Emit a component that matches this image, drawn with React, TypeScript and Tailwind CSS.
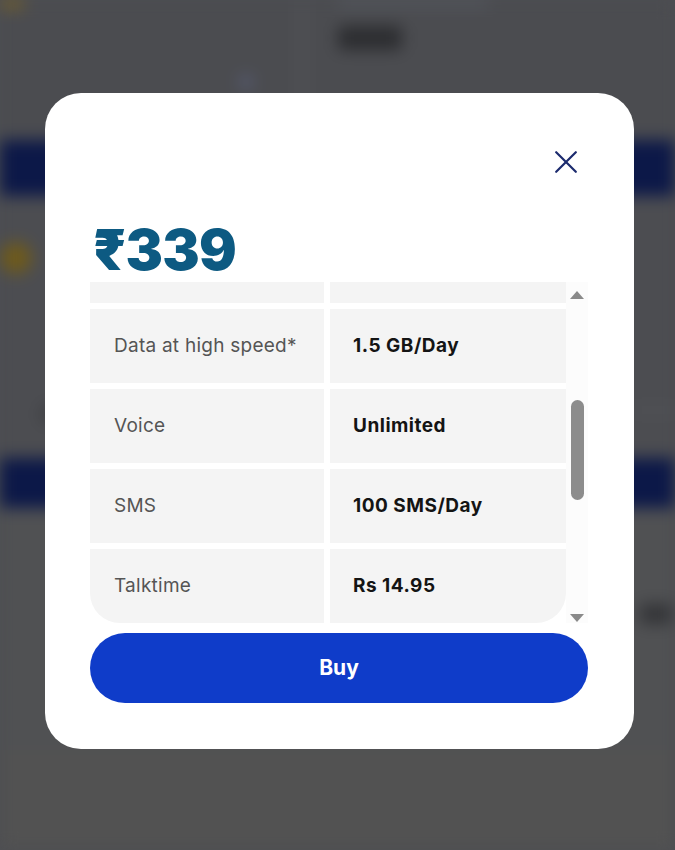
const rows = [
  { label: "", value: "" },
  { label: "Data at high speed*", value: "1.5 GB/Day" },
  { label: "Voice", value: "Unlimited" },
  { label: "SMS", value: "100 SMS/Day" },
  { label: "Talktime", value: "Rs 14.95" },
];

function BackdropPage() {
  return (
    <div className="absolute inset-0 flex flex-col blur-[8px]">
      <div className="flex h-[140px] bg-[#4b4c50]">
        <div className="flex w-[298px] flex-col justify-between">
          <div className="h-2 w-6 bg-[#7a6222]" />
          <div className="ml-[240px] flex flex-col gap-8 pb-2">
            <div className="h-3 w-3 rounded-full bg-[#5a6080]" />
            <div className="h-3 w-6 rounded-full bg-[#3d6a48]" />
          </div>
        </div>
        <div className="w-[8px] bg-[#515256]" />
        <div className="flex flex-col gap-5 pl-8">
          <div className="h-1.5 w-[150px] bg-[#565a62]" />
          <div className="h-6 w-16 rounded bg-[#2c2d30]" />
        </div>
      </div>
      <div className="h-[56px] bg-[#0c1848]" />
      <div className="flex h-[262px] flex-col bg-[#4c4d51] pt-[46px]">
        <div className="h-8 w-8 rounded-full bg-[#6e5a1c]" />
        <div className="mt-[130px] flex justify-between">
          <div className="ml-10 h-5 w-5 rounded-full bg-[#3e3f42]" />
          <div className="h-3 w-10 bg-[#4f5054]" />
        </div>
      </div>
      <div className="h-[50px] bg-[#0c1848]" />
      <div className="flex flex-1 flex-col bg-[#505153] pt-[96px]">
        <div className="ml-[640px] h-5 w-8 rounded bg-[#333437]" />
      </div>
      <div className="h-[100px] bg-[#525252]" />
    </div>
  );
}

function ScrollBar() {
  return (
    <div className="flex w-[22px] flex-col items-center bg-[#fcfcfc] pb-[1px] pt-[9px]">
      <div className="h-0 w-0 border-x-[7px] border-b-[8px] border-x-transparent border-b-[#8a8a8a]" />
      <div className="mt-[101px] h-[100px] w-[13px] rounded-full bg-[#8c8c8c]" />
      <div className="flex-1" />
      <div className="h-0 w-0 border-x-[7px] border-t-[8px] border-x-transparent border-t-[#8a8a8a]" />
    </div>
  );
}

export default function App() {
  return (
    <div
      className="relative h-[850px] w-full overflow-hidden bg-[#4d4e52]"
      style={{ fontFamily: "Inter, 'Noto Sans', Roboto, sans-serif" }}
    >
      <BackdropPage />
      <div className="absolute inset-0 pl-[45px] pt-[93px]">
        <div className="flex h-[656px] w-[589px] flex-col rounded-[36px] bg-white pl-[45px] pr-[46px]">
          <div className="flex justify-end pr-[11px] pt-[58px]">
            <svg width="22" height="22" viewBox="0 0 22 22" className="text-[#1c2b6e]">
              <path d="M1.2 1.2 L20.8 20.8 M20.8 1.2 L1.2 20.8" stroke="currentColor" strokeWidth="2.2" strokeLinecap="round" fill="none" />
            </svg>
          </div>
          <div className="ml-[3px] mt-[49px] text-[56px] font-black leading-none tracking-[-0.8px] text-[#0d5a82]">
            ₹339
          </div>
          <div className="mt-[4px] flex h-[341px]">
            <div className="flex-1 overflow-hidden">
              <div className="-mt-[53px] flex flex-col gap-[6px]">
                {rows.map((r, i) => {
                  const last = i === rows.length - 1;
                  return (
                    <div key={i} className="flex h-[74px] gap-[6px]">
                      <div
                        className={`flex w-[234px] items-center bg-[#f4f4f4] pl-6 text-[19px] tracking-[0.25px] text-[#555555] ${
                          last ? "rounded-bl-[30px]" : ""
                        }`}
                      >
                        {r.label}
                      </div>
                      <div
                        className={`flex flex-1 items-center bg-[#f4f4f4] pl-[23px] text-[19px] font-bold tracking-[0.5px] text-[#141414] ${
                          last ? "rounded-br-[30px]" : ""
                        }`}
                      >
                        {r.value}
                      </div>
                    </div>
                  );
                })}
              </div>
            </div>
            <ScrollBar />
          </div>
          <button className="mt-[10px] h-[70px] w-full rounded-full bg-[#0f3cc9] text-[21px] font-bold text-white">
            Buy
          </button>
        </div>
      </div>
    </div>
  );
}
